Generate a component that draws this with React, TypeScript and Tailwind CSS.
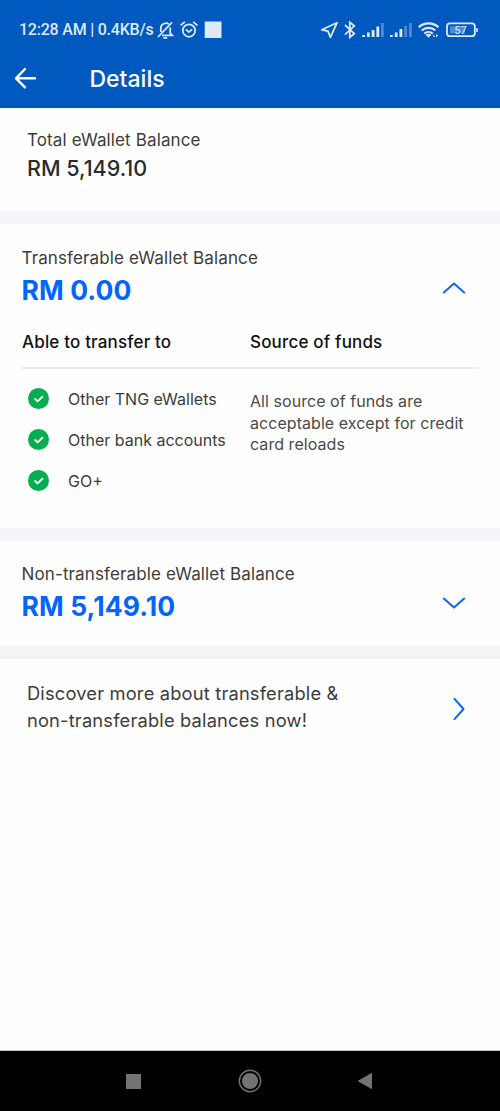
import type { ReactNode } from "react";

const transferTargets = ["Other TNG eWallets", "Other bank accounts", "GO+"];

function StatusBar() {
  return (
    <div className="flex h-[60px] items-center pl-[19px] text-[#dfe9f8]">
      <span className="w-[138px] whitespace-nowrap font-['Roboto'] text-[16px] font-medium leading-5 tracking-[-0.22px]">
        12:28 AM | 0.4KB/s
      </span>
      {/* muted bell, alarm, notification square */}
      <svg className="h-5 w-[68px]" viewBox="157 20 68 20" fill="none" stroke="currentColor" strokeWidth="1.8">
        <path d="M158 37 172 22.3" />
        <path d="M160.8 32V28.5c0-2.9 1.8-4.8 4.3-5.2 1.3-.2 2.6 0 3.6.6M170.2 27.5v5.7l2 2.2H162" />
        <path d="M163.3 37.8h4" />
        <circle cx="189" cy="30.6" r="6.2" />
        <path d="m185.8 29.4 3 2.7 3.4-2.7M180.6 25.4l4.2-3.5M197.4 25.4l-4.2-3.5" />
        <path d="M204.7 21.5h16.8V38h-16.8z" fill="currentColor" stroke="none" />
      </svg>
      {/* location, bluetooth, two signals, wifi, battery */}
      <svg className="ml-[95px] h-5 w-[160px]" viewBox="320 20 160 20" fill="none" stroke="currentColor" strokeWidth="1.8">
        <path d="M337 22.8 321.8 29.8l6.2 1.3 2.3 6.2z" strokeLinejoin="round" />
        <path d="m345 25 9.3 8.7-4.5 3.6V22.3l4.5 3.6-9.3 8.7" />
        <g fill="currentColor" stroke="none">
          <path d="M362.3 35h2.7v2h-2.7zM367 32.5h2.7V37H367zM371.7 30h2.8v7h-2.8zM376.4 26.5h2.8V37h-2.8z" />
          <path d="M381 23h2.8v14H381z" opacity=".35" />
          <path d="M390 35h2.7v2H390zM394.8 32.5h2.7V37h-2.7zM399.5 29h2.8v8h-2.8z" />
          <path d="M404.2 26h2.8v11h-2.8zM409 23h2.8v14H409z" opacity=".35" />
          <path d="m428.5 37.8-2.8-2.9c1.6-1.5 4-1.5 5.6 0zM433.2 37v-3l2 3zM436 34l2 1.5-2 2z" />
        </g>
        <path d="M418.7 27.2c5.5-5.1 14.2-5.1 19.7 0M421.7 30.6c3.8-3.6 9.9-3.6 13.7 0M424.3 33.6c2.4-2.1 6-2.1 8.4 0" strokeWidth="2.1" />
        <rect x="447" y="23.4" width="27.8" height="12.8" rx="3" />
        <path d="M450 26.3h15v7h-15z" fill="currentColor" stroke="none" opacity=".35" />
        <path d="M476.2 28h1.6v4h-1.6z" fill="currentColor" stroke="none" />
        <text x="460.5" y="33.8" textAnchor="middle" fill="currentColor" stroke="none" className="font-['Roboto'] text-[11px]">
          57
        </text>
      </svg>
    </div>
  );
}

function CheckBadge() {
  return (
    <svg className="h-[21px] w-[21px]" viewBox="0 0 21 21" fill="none">
      <circle cx="10.5" cy="10.5" r="10.5" fill="#07ae50" />
      <path d="m7.2 11 2.4 2.4 4.8-4.7" stroke="#fff" strokeWidth="1.9" strokeLinecap="round" strokeLinejoin="round" />
    </svg>
  );
}

function Chevron({ d, className }: { d: string; className: string }) {
  return (
    <svg className={className} viewBox="0 0 24 24" fill="none" stroke="#0a68f5" strokeWidth="2" strokeLinecap="round" strokeLinejoin="round">
      <path d={d} />
    </svg>
  );
}

function BalanceHeader({ label, amount, children }: { label: string; amount: ReactNode; children: ReactNode }) {
  return (
    <div className="flex justify-between pl-[21.5px] pr-[34px]">
      <div>
        <p className="text-[17px] leading-8 tracking-[0.13px] text-[#3c3c3c]">{label}</p>
        <p className="text-[26.5px] font-bold leading-[33px] tracking-[0.1px] text-[#0465fa]">{amount}</p>
      </div>
      {children}
    </div>
  );
}

export default function App() {
  return (
    <div className="flex h-[1111px] w-[500px] flex-col bg-[#fefefe] font-['Inter',sans-serif]">
      <header className="h-[108px] bg-[#0059bf]">
        <StatusBar />
        <div className="flex h-9 items-center text-white">
          <svg className="ml-[14px] h-6 w-6" viewBox="0 0 24 24" fill="none" stroke="currentColor" strokeWidth="2.4" strokeLinecap="round" strokeLinejoin="round">
            <path d="M21 12.3H2.3M11 3 2 12.3l9 9" />
          </svg>
          <h1 className="ml-[51.5px] pt-px text-[23px] font-medium leading-8">Details</h1>
        </div>
      </header>

      <section className="h-[103px] pl-[27px] pt-[18px]">
        <p className="text-[17px] leading-[29px] tracking-[0.13px] text-[#3c3c3c]">Total eWallet Balance</p>
        <p className="text-[21.5px] font-medium leading-[27px] text-[#2b2b2b]">RM 5,149.10</p>
      </section>

      <section className="h-[330px] border-y-[13px] border-[#f4f4f9] pt-[18px]">
        <BalanceHeader label="Transferable eWallet Balance" amount="RM 0.00">
          <Chevron d="m1.8 16.5 10.2-9 10.2 9" className="mt-[34px] h-6 w-6" />
        </BalanceHeader>
        <div className="mx-[21px] mt-[17px] flex h-[45px] border-b-2 border-[#ededed] pt-[5px] text-[17px] font-medium leading-[27px] tracking-[0.17px] text-[#111]">
          <h2 className="w-[229px] pl-px">Able to transfer to</h2>
          <h2>Source of funds</h2>
        </div>
        <div className="flex">
          <ul className="w-[250px] pl-7 pt-[9px]">
            {transferTargets.map((target) => (
              <li key={target} className="flex h-[41px] items-center gap-[19px] text-[16px] text-[#3c3c3c]">
                <CheckBadge />
                {target}
              </li>
            ))}
          </ul>
          <p className="pt-[22px] text-[16px] leading-[21.7px] tracking-[0.05px] text-[#4a4a4a]">
            All source of funds are
            <br />
            acceptable except for credit
            <br />
            card reloads
          </p>
        </div>
      </section>

      <section className="h-[118px] border-b-[13px] border-[#f4f4f9] pt-[17px]">
        <BalanceHeader label="Non-transferable eWallet Balance" amount="RM 5,149.10">
          <Chevron d="m1.8 7.5 10.2 9 10.2-9" className="mt-[33px] h-6 w-6" />
        </BalanceHeader>
      </section>

      <section className="flex flex-1 items-start justify-between pl-[27px] pr-[29px] pt-[21px]">
        <p className="text-[18.3px] leading-[27px] tracking-[0.18px] text-[#3c3c3c]">
          Discover more about transferable &amp;
          <br />
          non-transferable balances now!
        </p>
        <Chevron d="m7.5 1.8 9 10.2-9 10.2" className="mt-[17px] h-6 w-6" />
      </section>

      <nav className="flex h-[61px] items-center border-t border-[#c4c4c4] bg-black pl-[126px]">
        <div className="h-[15px] w-[15px] bg-[#737373]" />
        <svg className="ml-[97px] h-6 w-6" viewBox="0 0 24 24" fill="none">
          <circle cx="12" cy="12" r="10.7" stroke="#737373" strokeWidth="1.4" />
          <circle cx="12" cy="12" r="8" fill="#737373" />
        </svg>
        <svg className="ml-[95px] h-[18px] w-4" viewBox="0 0 16 18">
          <path d="M15 .8v16.4L.5 9z" fill="#737373" />
        </svg>
      </nav>
    </div>
  );
}
